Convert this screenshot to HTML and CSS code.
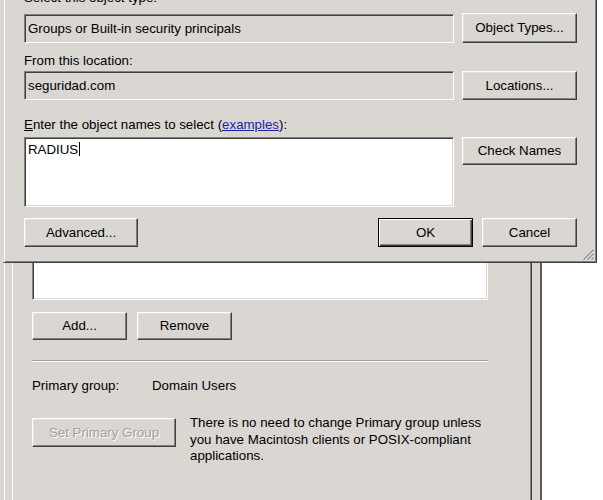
FILE: index.html
```html
<!DOCTYPE html>
<html>
<head>
<meta charset="utf-8">
<link rel="stylesheet" href="styles.css">
</head>
<body>
<div class="screen">
  <div class="bgwin">
    <div class="bgframe">
      <div class="tabpage">
        <div class="listbox"></div>
        <div class="btnrow">
          <div class="btn w95">Add...</div>
          <div class="btn w95">Remove</div>
        </div>
        <div class="sep"></div>
        <div class="pgrow"><span class="pglabel">Primary group:</span><span>Domain Users</span></div>
        <div class="setrow">
          <div class="btn setbtn disabled">Set Primary Group</div>
          <p class="note">There is no need to change Primary group unless<br>you have Macintosh clients or POSIX-compliant<br>applications.</p>
        </div>
      </div>
    </div>
  </div>

  <div class="dialog">
    <div class="label lbl1">Select this object type:</div>
    <div class="row rowb">
      <div class="field">Groups or Built-in security principals</div>
      <div class="btn side tall">Object Types...</div>
    </div>
    <div class="label lbl2">From this location:</div>
    <div class="row rowd">
      <div class="field">seguridad.com</div>
      <div class="btn side">Locations...</div>
    </div>
    <div class="label lbl3"><u>E</u>nter the object names to select (<a class="link">examples</a>):</div>
    <div class="row rowf">
      <div class="textarea">RADIUS<span class="caret"></span></div>
      <div class="btn side short">Check Names</div>
    </div>
    <div class="row rowg">
      <div class="btn adv">Advanced...</div>
      <div class="okcancel">
        <div class="btn w95 default">OK</div>
        <div class="btn w95">Cancel</div>
      </div>
    </div>
    <svg class="grip" width="13" height="13" viewBox="0 0 13 13">
      <line x1="12.5" y1="1.5" x2="1.5" y2="12.5" stroke="#ffffff" stroke-width="1"/>
      <line x1="12.5" y1="2.5" x2="2.5" y2="12.5" stroke="#8a8784" stroke-width="1.2"/>
      <line x1="12.5" y1="5.5" x2="5.5" y2="12.5" stroke="#ffffff" stroke-width="1"/>
      <line x1="12.5" y1="6.5" x2="6.5" y2="12.5" stroke="#8a8784" stroke-width="1.2"/>
      <line x1="12.5" y1="9.5" x2="9.5" y2="12.5" stroke="#ffffff" stroke-width="1"/>
      <line x1="12.5" y1="10.5" x2="10.5" y2="12.5" stroke="#8a8784" stroke-width="1.2"/>
    </svg>
  </div>
</div>
</body>
</html>
```

FILE: styles.css
```css
html, body {
  margin: 0;
  padding: 0;
  background: #ffffff;
}

.screen {
  position: relative;
  width: 603px;
  height: 500px;
  overflow: hidden;
  display: flex;
  background: #ffffff;
  font-family: "Liberation Sans", Arial, sans-serif;
  font-size: 13.3px;
  line-height: 16px;
  color: #000;
}

/* background properties window */
.bgwin {
  width: 542px;
  height: 500px;
  box-sizing: border-box;
  background: #dad6d2;
  border-right: 2px solid #5e5c5a;
  padding-left: 4px;
  display: flex;
}

.bgframe {
  flex: 1;
  border-left: 1px solid #ffffff;
  padding-left: 7px;
  display: flex;
}

.tabpage {
  width: 520px;
  box-sizing: border-box;
  border-left: 1px solid #ffffff;
  border-right: 1px solid #404040;
  box-shadow: inset -1px 0 #808080;
  padding-left: 19px;
  display: flex;
  flex-direction: column;
}

.listbox {
  width: 456px;
  height: 100px;
  margin-top: 200px;
  box-sizing: border-box;
  background: #ffffff;
  border-top: 1px solid #808080;
  border-left: 1px solid #808080;
  border-bottom: 1px solid #ffffff;
  border-right: 1px solid #ffffff;
  box-shadow: inset 1px 1px #404040, inset -1px -1px #dad6d2;
}

.btnrow {
  display: flex;
  gap: 10px;
  margin-top: 12px;
}

.btnrow .btn {
  height: 28px;
}

.sep {
  width: 456px;
  height: 2px;
  box-sizing: border-box;
  border-top: 1px solid #a09d9a;
  border-bottom: 1px solid #ffffff;
  margin-top: 20px;
}

.pgrow {
  display: flex;
  margin-top: 16px;
}

.pglabel {
  width: 120px;
}

.setrow {
  display: flex;
  align-items: flex-start;
  margin-top: 24px;
}

.setbtn {
  width: 144px;
  height: 29px;
}

.note {
  margin: -3px 0 0 14px;
  line-height: 16.6px;
}

/* buttons */
.btn {
  box-sizing: border-box;
  display: flex;
  align-items: center;
  justify-content: center;
  background: #dad6d2;
  border: 1px solid;
  border-color: #ffffff #404040 #404040 #ffffff;
  box-shadow: inset -1px -1px #808080, inset 1px 1px #e4e1de;
  height: 29px;
  white-space: nowrap;
}

.w95 {
  width: 95px;
}

.btn.default {
  border: 1px solid #000000;
  box-shadow: inset 1px 1px #ffffff, inset -1px -1px #404040, inset -2px -2px #808080;
}

.btn.disabled {
  color: #a3a09c;
  text-shadow: 1px 1px #ffffff;
}

/* foreground dialog */
.dialog {
  position: absolute;
  left: 3px;
  top: -30px;
  width: 594px;
  box-sizing: border-box;
  background: #dad6d2;
  border: 1px solid;
  border-color: #dad6d2 #404040 #404040 #dad6d2;
  box-shadow: inset 1px 1px #ffffff, inset -1px -1px #808080;
  padding: 19px 19px 15px 20px;
  display: flex;
  flex-direction: column;
}

.label {
  height: 16px;
}

.lbl2 {
  margin-top: 10px;
}

.lbl3 {
  margin-top: 17px;
}

.link {
  color: #1f1fa8;
  text-decoration: underline;
}

.row {
  display: flex;
  gap: 8px;
}

.rowb {
  margin-top: 7px;
  align-items: flex-end;
}

.rowd {
  margin-top: 2px;
  align-items: flex-end;
}

.rowf {
  margin-top: 4px;
  align-items: flex-start;
}

.rowg {
  margin-top: 11px;
  justify-content: space-between;
}

.field {
  width: 430px;
  height: 29px;
  box-sizing: border-box;
  display: flex;
  align-items: center;
  padding-left: 3px;
  background: #dad6d2;
  border-top: 1px solid #808080;
  border-left: 1px solid #808080;
  border-bottom: 1px solid #ffffff;
  border-right: 1px solid #ffffff;
  box-shadow: inset 1px 1px #404040, inset -1px -1px #dad6d2;
}

.side {
  width: 115px;
}

.side.tall {
  height: 30px;
}

.side.short {
  height: 28px;
}

.textarea {
  width: 430px;
  height: 70px;
  box-sizing: border-box;
  background: #ffffff;
  padding: 4px 0 0 3px;
  border-top: 1px solid #808080;
  border-left: 1px solid #808080;
  border-bottom: 1px solid #ffffff;
  border-right: 1px solid #ffffff;
  box-shadow: inset 1px 1px #404040, inset -1px -1px #dad6d2;
}

.caret {
  display: inline-block;
  width: 1px;
  height: 14px;
  background: #000;
  vertical-align: -2px;
  margin-left: 1px;
}

.adv {
  width: 114px;
}

.okcancel {
  display: flex;
  gap: 9px;
}

.grip {
  position: absolute;
  right: 2px;
  bottom: 2px;
}
```
